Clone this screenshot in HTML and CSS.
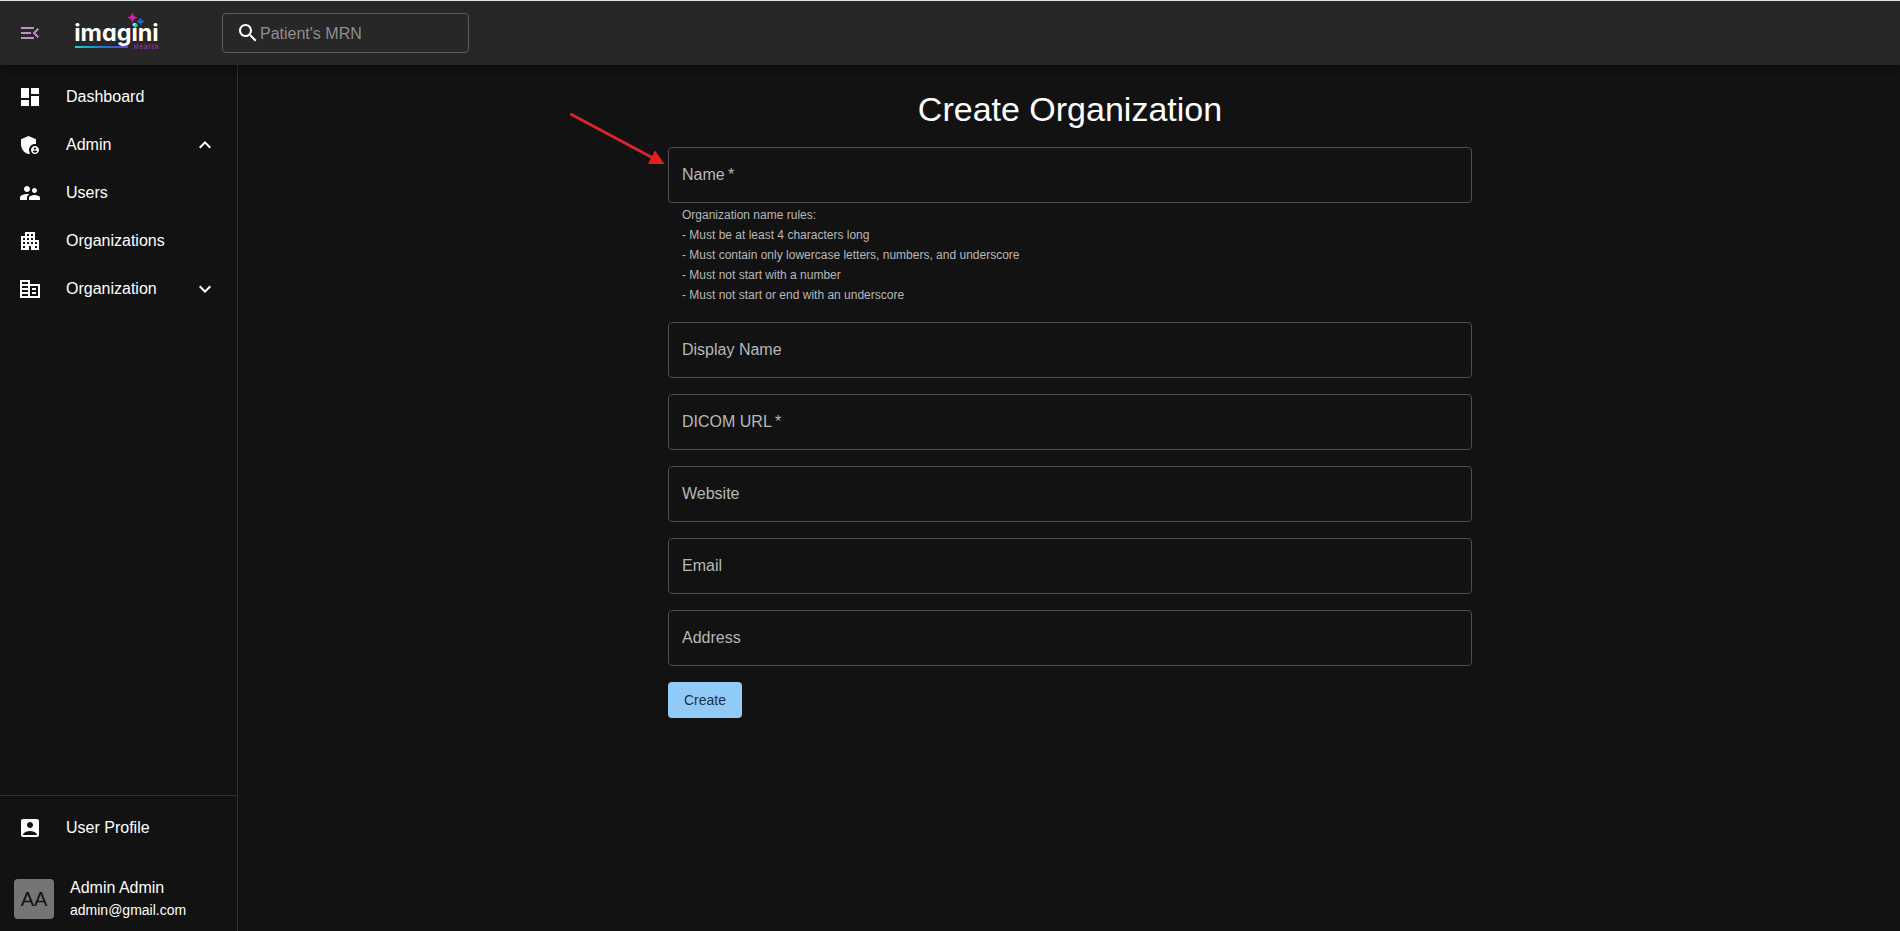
FILE: index.html
```
<!DOCTYPE html>
<html lang="en">
<head>
<meta charset="utf-8">
<title>Create Organization</title>
<link rel="stylesheet" href="styles.css">
</head>
<body>
<div class="app">
  <header class="topbar">
    <svg class="icon menu-icon" viewBox="0 0 24 24"><path d="M3 18h13v-2H3v2zm0-5h10v-2H3v2zm0-7v2h13V6H3zm18 9.59L17.42 12 21 8.41 19.59 7l-5 5 5 5L21 15.59z"/></svg>
    <svg class="logo" viewBox="0 0 90 44" width="90" height="44">
      <defs>
        <linearGradient id="underline" x1="0" x2="1" y1="0" y2="0"><stop offset="0" stop-color="#1fd6c4"/><stop offset=".55" stop-color="#1b74d8"/><stop offset="1" stop-color="#6a45c8"/></linearGradient>
        <linearGradient id="health" x1="0" x2="1" y1="0" y2="0"><stop offset="0" stop-color="#7d35a8"/><stop offset="1" stop-color="#c01c98"/></linearGradient>
      </defs>
      <rect x="3" y="36" width="53" height="2" fill="url(#underline)"/>
      <text class="logo-name" x="2.2" y="31.4" textLength="84.5" lengthAdjust="spacingAndGlyphs">imagini</text>
      <text class="logo-sub" x="61.8" y="39.3" textLength="24.5" fill="url(#health)">Health</text>
      <path d="M60.4 3Q61 7 64.8 7.6Q61 8.200 60.4 12.400Q59.800 8.200 56 7.600Q59.800 7 60.400 3z" fill="#e01fa4" stroke="#e01fa4" stroke-width=".6"/>
      <path d="M68.500 8Q69 11 72 11.500Q69 12 68.500 15Q68 12 65 11.500Q68 11 68.500 8z" fill="#1b6fd8" stroke="#1b6fd8" stroke-width=".6"/>
      <path d="M63.500 13Q63.900 15.200 66 15.600Q63.900 16 63.500 18.200Q63.100 16 61 15.600Q63.100 15.200 63.500 13z" fill="#24d6ba" stroke="#24d6ba" stroke-width=".6"/>
    </svg>
    <div class="search">
      <svg class="icon" viewBox="0 0 24 24"><path d="M15.5 14h-.79l-.28-.27C15.410 12.590 16 11.110 16 9.500 16 5.910 13.090 3 9.500 3S3 5.910 3 9.500 5.910 16 9.500 16c1.610 0 3.090-.59 4.230-1.570l.27.28v.79l5 4.990L20.490 19l-4.990-5zm-6 0C7.010 14 5 11.990 5 9.500S7.010 5 9.500 5 14 7.010 14 9.500 11.990 14 9.500 14z"/></svg>
      <span>Patient's MRN</span>
    </div>
  </header>

  <div class="body">
    <aside class="sidebar">
      <nav class="nav">
        <a class="nav-item"><svg class="icon" viewBox="0 0 24 24"><path d="M3 13h8V3H3v10zm0 8h8v-6H3v6zm10 0h8V11h-8v10zm0-18v6h8V3h-8z"/></svg><span>Dashboard</span></a>
        <a class="nav-item"><svg class="icon" viewBox="0 0 24 24"><path d="M17 11c.34 0 .67.04 1 .09V6.270L10.500 3 3 6.270v4.910c0 4.540 3.200 8.790 7.500 9.820.55-.13 1.080-.32 1.600-.55-.69-.98-1.100-2.170-1.100-3.450 0-3.310 2.690-6 6-6z"/><path fill-rule="evenodd" d="M17 13c-2.210 0-4 1.790-4 4s1.790 4 4 4 4-1.790 4-4-1.790-4-4-4zm0 1.380c.62 0 1.120.51 1.120 1.120s-.51 1.120-1.120 1.120-1.120-.51-1.120-1.120.5-1.120 1.120-1.120zm0 5.370c-.93 0-1.740-.46-2.240-1.170.05-.72 1.510-1.080 2.240-1.080s2.190.36 2.240 1.080c-.5.71-1.310 1.170-2.240 1.170z"/></svg><span>Admin</span><svg class="icon chevron" viewBox="0 0 24 24"><path d="m12 8-6 6 1.410 1.410L12 10.830l4.590 4.580L18 14z"/></svg></a>
        <a class="nav-item"><svg class="icon" viewBox="0 0 24 24"><path d="M16.500 12c1.380 0 2.490-1.120 2.490-2.500S17.880 7 16.500 7C15.120 7 14 8.120 14 9.500s1.120 2.500 2.500 2.500zM9 11c1.660 0 2.990-1.340 2.990-3S10.660 5 9 5C7.340 5 6 6.340 6 8s1.340 3 3 3zm7.500 3c-1.830 0-5.500.92-5.500 2.750V19h11v-2.250c0-1.830-3.670-2.750-5.500-2.750zM9 13c-2.330 0-7 1.170-7 3.500V19h7v-2.250c0-.85.33-2.340 2.370-3.470C10.500 13.100 9.660 13 9 13z"/></svg><span>Users</span></a>
        <a class="nav-item"><svg class="icon" viewBox="0 0 24 24"><path d="M17 11V3H7v4H3v14h8v-4h2v4h8V11h-4zM7 19H5v-2h2v2zm0-4H5v-2h2v2zm0-4H5V9h2v2zm4 4H9v-2h2v2zm0-4H9V9h2v2zm0-4H9V5h2v2zm4 8h-2v-2h2v2zm0-4h-2V9h2v2zm0-4h-2V5h2v2zm4 12h-2v-2h2v2zm0-4h-2v-2h2v2z"/></svg><span>Organizations</span></a>
        <a class="nav-item"><svg class="icon" viewBox="0 0 24 24"><path d="M12 7V3H2v18h20V7H12zm-2 12H4v-2h6v2zm0-4H4v-2h6v2zm0-4H4V9h6v2zm0-4H4V5h6v2zm10 12h-8V9h8v10zm-2-8h-4v2h4v-2zm0 4h-4v2h4v-2z"/></svg><span>Organization</span><svg class="icon chevron" viewBox="0 0 24 24"><path d="M16.590 8.590 12 13.170 7.410 8.590 6 10l6 6 6-6z"/></svg></a>
      </nav>
      <div class="account">
        <a class="nav-item"><svg class="icon" viewBox="0 0 24 24"><path d="M19 3H5c-1.110 0-2 .9-2 2v14c0 1.100.89 2 2 2h14c1.100 0 2-.9 2-2V5c0-1.100-.9-2-2-2zm-7 3c1.660 0 3 1.340 3 3s-1.340 3-3 3-3-1.340-3-3 1.340-3 3-3zm7 13H5v-.23c0-.62.28-1.200.76-1.580C7.470 15.820 9.640 15 12 15s4.530.82 6.240 2.190c.48.38.76.97.76 1.580V19z"/></svg><span>User Profile</span></a>
        <div class="user">
          <div class="avatar">AA</div>
          <div class="user-text">
            <div class="user-name">Admin Admin</div>
            <div class="user-mail">admin@gmail.com</div>
          </div>
        </div>
      </div>
    </aside>

    <main class="main">
      <form class="form">
        <h1 class="title">Create Organization</h1>
        <div class="field-group">
          <div class="field">Name&thinsp;*</div>
          <p class="help">Organization name rules:<br>- Must be at least 4 characters long<br>- Must contain only lowercase letters, numbers, and underscore<br>- Must not start with a number<br>- Must not start or end with an underscore</p>
          <svg class="pointer" viewBox="0 0 100 56" width="100" height="56"><path d="M4.500 4.500 86 48" fill="none" stroke="#d8262a" stroke-width="3" stroke-linecap="round"/><path d="M88 40.500 97.500 54 81 54z" fill="#e81c20"/></svg>
        </div>
        <div class="field">Display Name</div>
        <div class="field">DICOM URL&thinsp;*</div>
        <div class="field">Website</div>
        <div class="field">Email</div>
        <div class="field">Address</div>
        <button class="create" type="button">Create</button>
      </form>
    </main>
  </div>
</div>
</body>
</html>
```
FILE: styles.css
```
* { box-sizing: border-box; }
body {
  margin: 0;
  background: #121212;
  color: #fff;
  font: 16px/24px "Liberation Sans", Arial, sans-serif;
}
.app { height: 931px; display: flex; flex-direction: column; overflow: hidden; }
.icon { width: 24px; height: 24px; fill: currentColor; flex: none; }

.topbar {
  height: 65px;
  flex: none;
  display: flex;
  align-items: center;
  padding-left: 18px;
  background: #272727;
  border-top: 1px solid #dfe5e2;
  box-shadow: 0 2px 4px -1px rgba(0,0,0,.2), 0 4px 5px rgba(0,0,0,.14), 0 1px 10px rgba(0,0,0,.12);
  z-index: 1;
}
.menu-icon { color: #bf8fc8; }
.logo { margin: 0 60px 2px 30px; flex: none; }
.logo-name {
  font: 700 22.5px Inter, sans-serif;
  font-feature-settings: "cv11";
  fill: #fff;
}
.logo-sub { font: 700 6px Inter, sans-serif; }
.search {
  width: 247px;
  height: 40px;
  display: flex;
  align-items: center;
  padding-left: 13px;
  border: 1px solid #5b5b5b;
  border-radius: 4px;
}
.search span { color: #8e8e8e; padding-top: 1px; }

.body { flex: 1; min-height: 0; display: flex; }
.sidebar {
  width: 238px;
  flex: none;
  display: flex;
  flex-direction: column;
  justify-content: space-between;
  border-right: 1px solid #303030;
}
.nav { padding-top: 8px; }
.nav-item {
  height: 48px;
  display: flex;
  align-items: center;
  gap: 24px;
  padding: 0 20px 0 18px;
}
.chevron { margin-left: auto; }
.account { border-top: 1px solid #303030; padding: 8px 0 10px; }
.user { display: flex; align-items: center; gap: 16px; padding: 24px 14px 0; }
.avatar {
  width: 40px;
  height: 40px;
  display: grid;
  place-items: center;
  border-radius: 4px;
  background: #757575;
  color: #121212;
  font-size: 20px;
  line-height: 20px;
}
.user-text { padding-bottom: 1px; }
.user-mail { font-size: 14px; line-height: 20px; }

.main { flex: 1; display: flex; justify-content: center; padding-left: 2px; }
.form {
  width: 804px;
  display: flex;
  flex-direction: column;
  gap: 16px;
  padding-top: 23px;
}
.title {
  margin: 0 0 1px;
  text-align: center;
  font-size: 34px;
  font-weight: 400;
  line-height: 42px;
}
.field-group { position: relative; }
.field {
  height: 56px;
  flex: none;
  padding: 15px 13px;
  border: 1px solid #4e4e4e;
  border-radius: 4px;
  color: #b8b8b8;
}
.help {
  margin: 3px 14px 0;
  color: #b8b8b8;
  font-size: 12px;
  line-height: 1.66;
}
.pointer { position: absolute; left: -101px; top: -37px; }
.create {
  align-self: flex-start;
  width: 74px;
  height: 36px;
  padding: 0;
  border: 0;
  border-radius: 4px;
  background: #90caf9;
  color: rgba(0,0,0,.8);
  font: 14px/24px "Liberation Sans", Arial, sans-serif;
}
```
